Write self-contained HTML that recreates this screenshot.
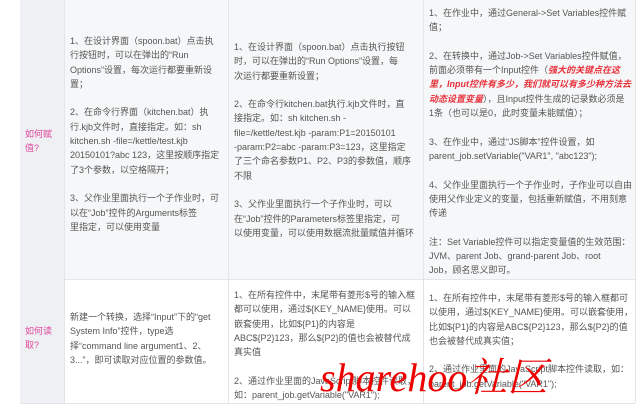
<!DOCTYPE html>
<html><head><meta charset="utf-8"><style>
body{margin:0;width:640px;height:413px;background:#fff;overflow:hidden;position:relative;font-family:"Liberation Sans","Noto Sans CJK SC",sans-serif;font-size:9px;color:#555;}
.bg{position:absolute}
.t{position:absolute;white-space:nowrap;line-height:14.3px}
.lab{color:#e0479e}
.red{color:#e8303a;font-weight:bold;font-style:italic}
.wm{position:absolute;left:320px;top:356px;font-family:"Liberation Serif","Noto Serif CJK SC",serif;font-style:italic;color:#e00;font-size:40px;line-height:44px;white-space:nowrap}
</style></head><body>
<div class="bg" style="left:20px;top:0;width:615px;height:279px;background:#f6f7f8"></div>
<div class="bg" style="left:20px;top:279px;width:615px;height:123px;background:#fff;border-top:1px solid #e3e5e8;border-bottom:1px solid #e3e5e8"></div>
<div class="bg" style="left:20px;top:0;width:44px;height:403px;background:#eef0f3"></div>
<div class="bg" style="left:64px;top:0;width:1px;height:403px;background:#e3e5e8"></div>
<div class="bg" style="left:228px;top:0;width:1px;height:403px;background:#e3e5e8"></div>
<div class="bg" style="left:423px;top:0;width:1px;height:403px;background:#e3e5e8"></div>
<div class="bg" style="left:635px;top:0;width:1px;height:403px;background:#e3e5e8"></div>

<div class="t lab" style="left:25px;top:127px">如何赋<br>值?</div>
<div class="t" style="left:70px;top:34px">1、在设计界面（spoon.bat）点击执<br>行按钮时，可以在弹出的“Run<br>Options”设置，每次运行都要重新设<br>置；<br><br>2、在命令行界面（kitchen.bat）执<br>行.kjb文件时，直接指定。如：sh<br>kitchen.sh -file=/kettle/test.kjb<br>20150101?abc 123，这里按顺序指定<br>了3个参数，以空格隔开；<br><br>3、父作业里面执行一个子作业时，可<br>以在“Job”控件的Arguments标签<br>里指定，可以使用变量</div>
<div class="t" style="left:234px;top:40px">1、在设计界面（spoon.bat）点击执行按钮<br>时，可以在弹出的“Run Options”设置，每<br>次运行都要重新设置；<br><br>2、在命令行kitchen.bat执行.kjb文件时，直<br>接指定。如：sh kitchen.sh -<br>file=/kettle/test.kjb -param:P1=20150101<br>-param:P2=abc -param:P3=123，这里指定<br>了三个命名参数P1、P2、P3的参数值，顺序<br>不限<br><br>3、父作业里面执行一个子作业时，可以<br>在“Job”控件的Parameters标签里指定，可<br>以使用变量，可以使用数据流批量赋值并循环</div>
<div class="t" style="left:429px;top:6px">1、在作业中，通过General-&gt;Set Variables控件赋<br>值；<br><br>2、在转换中，通过Job-&gt;Set Variables控件赋值，<br>前面必须带有一个Input控件（<span class="red">强大的关键点在这</span><br><span class="red">里，Input控件有多少，我们就可以有多少种方法去</span><br><span class="red">动态设置变量</span>），且Input控件生成的记录数必须是<br>1条（也可以是0，此时变量未能赋值）；<br><br>3、在作业中，通过“JS脚本”控件设置，如<br>parent_job.setVariable("VAR1", "abc123");<br><br>4、父作业里面执行一个子作业时，子作业可以自由<br>使用父作业定义的变量，包括重新赋值，不用刻意<br>传递<br><br>注：Set Variable控件可以指定变量值的生效范围：<br>JVM、parent Job、grand-parent Job、root<br>Job，顾名思义即可。</div>

<div class="t lab" style="left:25px;top:324px">如何读<br>取?</div>
<div class="t" style="left:70px;top:310px">新建一个转换，选择“Input”下的“get<br>System Info”控件，type选<br>择“command line argument1、2、<br>3...”，即可读取对应位置的参数值。</div>
<div class="t" style="left:234px;top:288px">1、在所有控件中，末尾带有菱形$号的输入框<br>都可以使用，通过${KEY_NAME}使用。可以<br>嵌套使用，比如${P1}的内容是<br>ABC${P2}123，那么${P2}的值也会被替代成<br>真实值<br><br>2、通过作业里面的JavaScript脚本控件读取，<br>如：parent_job.getVariable("VAR1");</div>
<div class="t" style="left:429px;top:291px">1、在所有控件中，末尾带有菱形$号的输入框都可<br>以使用，通过${KEY_NAME}使用。可以嵌套使用，<br>比如${P1}的内容是ABC${P2}123，那么${P2}的值<br>也会被替代成真实值；<br><br>2、通过作业里面的JavaScript脚本控件读取，如：<br>parent_job.getVariable("VAR1");</div>
<div class="wm">sharehoo社区</div>
</body></html>
